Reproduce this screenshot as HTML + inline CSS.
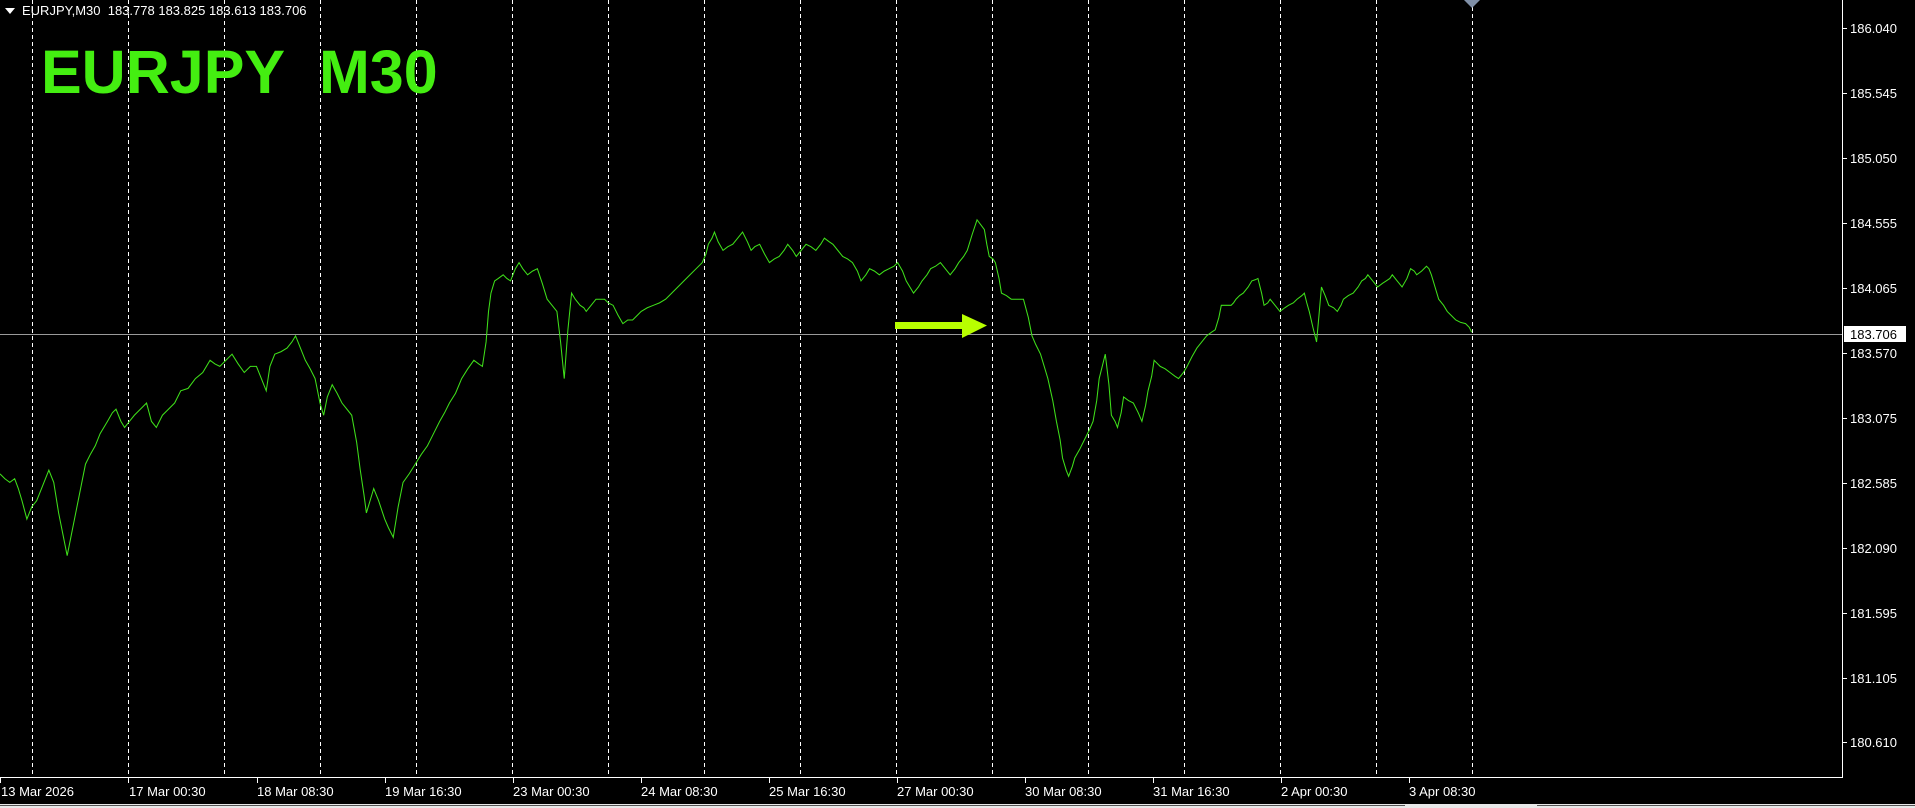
<!DOCTYPE html>
<html><head><meta charset="utf-8"><style>
html,body{margin:0;padding:0;background:#000;width:1915px;height:808px;overflow:hidden}
svg{display:block}
text{font-family:"Liberation Sans",sans-serif}
</style></head><body>
<svg width="1915" height="808" viewBox="0 0 1915 808">
<rect width="1915" height="808" fill="#000"/>
<g stroke="#fff" stroke-width="1" stroke-dasharray="4,3">
<line x1="32.5" y1="0" x2="32.5" y2="777"/><line x1="128.5" y1="0" x2="128.5" y2="777"/><line x1="224.5" y1="0" x2="224.5" y2="777"/><line x1="320.5" y1="0" x2="320.5" y2="777"/><line x1="416.5" y1="0" x2="416.5" y2="777"/><line x1="512.5" y1="0" x2="512.5" y2="777"/><line x1="608.5" y1="0" x2="608.5" y2="777"/><line x1="704.5" y1="0" x2="704.5" y2="777"/><line x1="800.5" y1="0" x2="800.5" y2="777"/><line x1="896.5" y1="0" x2="896.5" y2="777"/><line x1="992.5" y1="0" x2="992.5" y2="777"/><line x1="1088.5" y1="0" x2="1088.5" y2="777"/><line x1="1184.5" y1="0" x2="1184.5" y2="777"/><line x1="1280.5" y1="0" x2="1280.5" y2="777"/><line x1="1376.5" y1="0" x2="1376.5" y2="777"/><line x1="1472.5" y1="0" x2="1472.5" y2="777"/>
</g>
<line x1="0" y1="334.5" x2="1842" y2="334.5" stroke="#9a9a9a"/>
<polygon points="1464,0 1480,0 1472,8" fill="#8090a8"/>
<g transform="scale(1.2213)">
<polyline fill="none" stroke="#3fe01a" stroke-width="0.85" points="0,388 4,392 8,395 12,392 15,400 18,410 22,425 26,415 30,410 34,400 40,385 44,395 48,420 52,440 55,455 58,440 62,420 66,400 70,380 74,372 78,365 82,355 88,345 92,338 95,335 99,345 102,350 106,345 110,340 115,335 120,330 124,345 128,350 133,340 138,335 143,330 148,320 154,318 160,310 166,305 172,295 176,298 180,300 185,295 190,290 195,298 200,305 205,300 210,300 214,310 218,320 221,300 225,290 230,288 235,285 239,280 242,275 246,285 250,295 254,302 258,310 262,330 265,340 268,325 272,315 276,322 280,330 284,335 288,340 292,362 295,385 298,405 300,420 303,410 306,400 310,410 315,425 318,432 322,440 326,415 330,395 335,388 340,380 345,372 350,365 355,355 360,345 364,338 368,330 373,322 378,310 383,302 388,295 392,298 395,300 398,280 400,255 402,240 405,230 408,228 412,225 415,228 418,230 422,220 425,215 428,220 432,225 436,222 440,220 444,232 448,245 452,250 456,255 459,280 462,310 465,270 468,240 471,245 475,250 478,252 480,255 484,250 488,245 492,245 495,245 498,248 502,250 506,258 510,265 514,262 518,262 522,258 525,255 530,252 535,250 540,248 545,245 550,240 555,235 560,230 565,225 570,220 575,215 578,208 580,200 583,195 585,190 588,198 592,205 596,202 600,200 604,195 608,190 612,198 615,205 618,202 622,200 626,208 630,215 634,212 638,210 642,205 645,200 649,205 652,210 656,205 660,200 664,202 668,205 672,200 675,195 679,198 682,200 686,205 690,210 694,212 698,215 702,222 705,230 709,225 712,220 716,222 720,225 724,222 728,220 732,218 735,215 739,222 742,230 745,235 748,240 752,235 755,230 759,225 762,220 766,218 770,215 774,220 778,225 782,220 785,215 789,210 792,205 796,192 800,180 803,184 806,188 808,200 810,210 813,212 815,215 818,228 820,240 824,242 828,245 833,245 838,245 842,260 845,275 848,282 852,290 855,300 858,310 862,328 865,345 868,360 870,375 873,385 875,390 878,382 880,375 884,368 888,360 892,352 895,345 898,328 900,310 903,298 905,290 908,315 910,340 913,345 915,350 918,338 920,325 924,328 928,330 932,338 935,345 938,332 940,320 943,308 945,295 948,298 950,300 954,302 958,305 962,308 965,310 969,305 972,300 976,292 980,285 984,280 988,275 992,272 995,270 998,260 1000,250 1004,250 1008,250 1010,248 1012,245 1015,242 1018,240 1022,235 1025,230 1028,229 1030,228 1033,240 1035,250 1038,248 1040,245 1044,250 1048,255 1052,252 1055,250 1059,248 1062,245 1066,242 1068,240 1070,248 1072,255 1075,268 1078,280 1080,258 1082,235 1085,242 1088,250 1092,252 1095,255 1098,250 1100,245 1104,242 1108,240 1112,235 1115,230 1118,228 1120,225 1124,230 1128,235 1132,232 1135,230 1138,228 1140,225 1144,230 1148,235 1152,228 1155,220 1158,222 1160,225 1164,222 1168,218 1170,220 1172,225 1175,235 1178,245 1182,250 1185,255 1188,258 1192,262 1196,264 1200,265 1203,268 1205,272"/>
</g>
<rect x="895" y="322" width="68" height="7" fill="#b8ff00"/>
<polygon points="962,314 987,325.5 962,338" fill="#b8ff00"/>
<line x1="1842.5" y1="0" x2="1842.5" y2="778" stroke="#fff"/>
<line x1="0" y1="777.5" x2="1843" y2="777.5" stroke="#fff"/>
<g fill="#fff" font-size="13">
<polygon points="5,8 15,8 10,14"/>
<text x="22" y="15">EURJPY,M30&#160; 183.778 183.825 183.613 183.706</text>
</g>
<text x="41" y="93" font-size="61" font-weight="bold" fill="#44ee11">EURJPY&#160; M30</text>
<g fill="#fff" font-size="13">
<text x="1850" y="33">186.040</text><text x="1850" y="98">185.545</text><text x="1850" y="163">185.050</text><text x="1850" y="228">184.555</text><text x="1850" y="293">184.065</text><text x="1850" y="358">183.570</text><text x="1850" y="423">183.075</text><text x="1850" y="488">182.585</text><text x="1850" y="553">182.090</text><text x="1850" y="618">181.595</text><text x="1850" y="683">181.105</text><text x="1850" y="747">180.610</text>
</g>
<g stroke="#fff"><line x1="1843" y1="28.5" x2="1847" y2="28.5"/><line x1="1843" y1="93.5" x2="1847" y2="93.5"/><line x1="1843" y1="158.5" x2="1847" y2="158.5"/><line x1="1843" y1="223.5" x2="1847" y2="223.5"/><line x1="1843" y1="288.5" x2="1847" y2="288.5"/><line x1="1843" y1="353.5" x2="1847" y2="353.5"/><line x1="1843" y1="418.5" x2="1847" y2="418.5"/><line x1="1843" y1="483.5" x2="1847" y2="483.5"/><line x1="1843" y1="548.5" x2="1847" y2="548.5"/><line x1="1843" y1="613.5" x2="1847" y2="613.5"/><line x1="1843" y1="678.5" x2="1847" y2="678.5"/><line x1="1843" y1="742.5" x2="1847" y2="742.5"/></g>
<rect x="1844" y="326" width="62" height="16" fill="#fff"/>
<text x="1850" y="339" font-size="13" fill="#000">183.706</text>
<g stroke="#fff">
<line x1="0.5" y1="778" x2="0.5" y2="783"/><line x1="128.5" y1="778" x2="128.5" y2="783"/><line x1="257.5" y1="778" x2="257.5" y2="783"/><line x1="385.5" y1="778" x2="385.5" y2="783"/><line x1="513.5" y1="778" x2="513.5" y2="783"/><line x1="641.5" y1="778" x2="641.5" y2="783"/><line x1="769.5" y1="778" x2="769.5" y2="783"/><line x1="897.5" y1="778" x2="897.5" y2="783"/><line x1="1025.5" y1="778" x2="1025.5" y2="783"/><line x1="1153.5" y1="778" x2="1153.5" y2="783"/><line x1="1281.5" y1="778" x2="1281.5" y2="783"/><line x1="1409.5" y1="778" x2="1409.5" y2="783"/>
</g>
<g fill="#fff" font-size="13">
<text x="1" y="796">13 Mar 2026</text><text x="129" y="796">17 Mar 00:30</text><text x="257" y="796">18 Mar 08:30</text><text x="385" y="796">19 Mar 16:30</text><text x="513" y="796">23 Mar 00:30</text><text x="641" y="796">24 Mar 08:30</text><text x="769" y="796">25 Mar 16:30</text><text x="897" y="796">27 Mar 00:30</text><text x="1025" y="796">30 Mar 08:30</text><text x="1153" y="796">31 Mar 16:30</text><text x="1281" y="796">2 Apr 00:30</text><text x="1409" y="796">3 Apr 08:30</text>
</g>
<rect x="0" y="804" width="1915" height="4" fill="#e8e8e8"/>
<line x1="0" y1="805.5" x2="1405" y2="805.5" stroke="#555"/>
<line x1="1537" y1="805.5" x2="1915" y2="805.5" stroke="#555"/>
</svg>
</body></html>
